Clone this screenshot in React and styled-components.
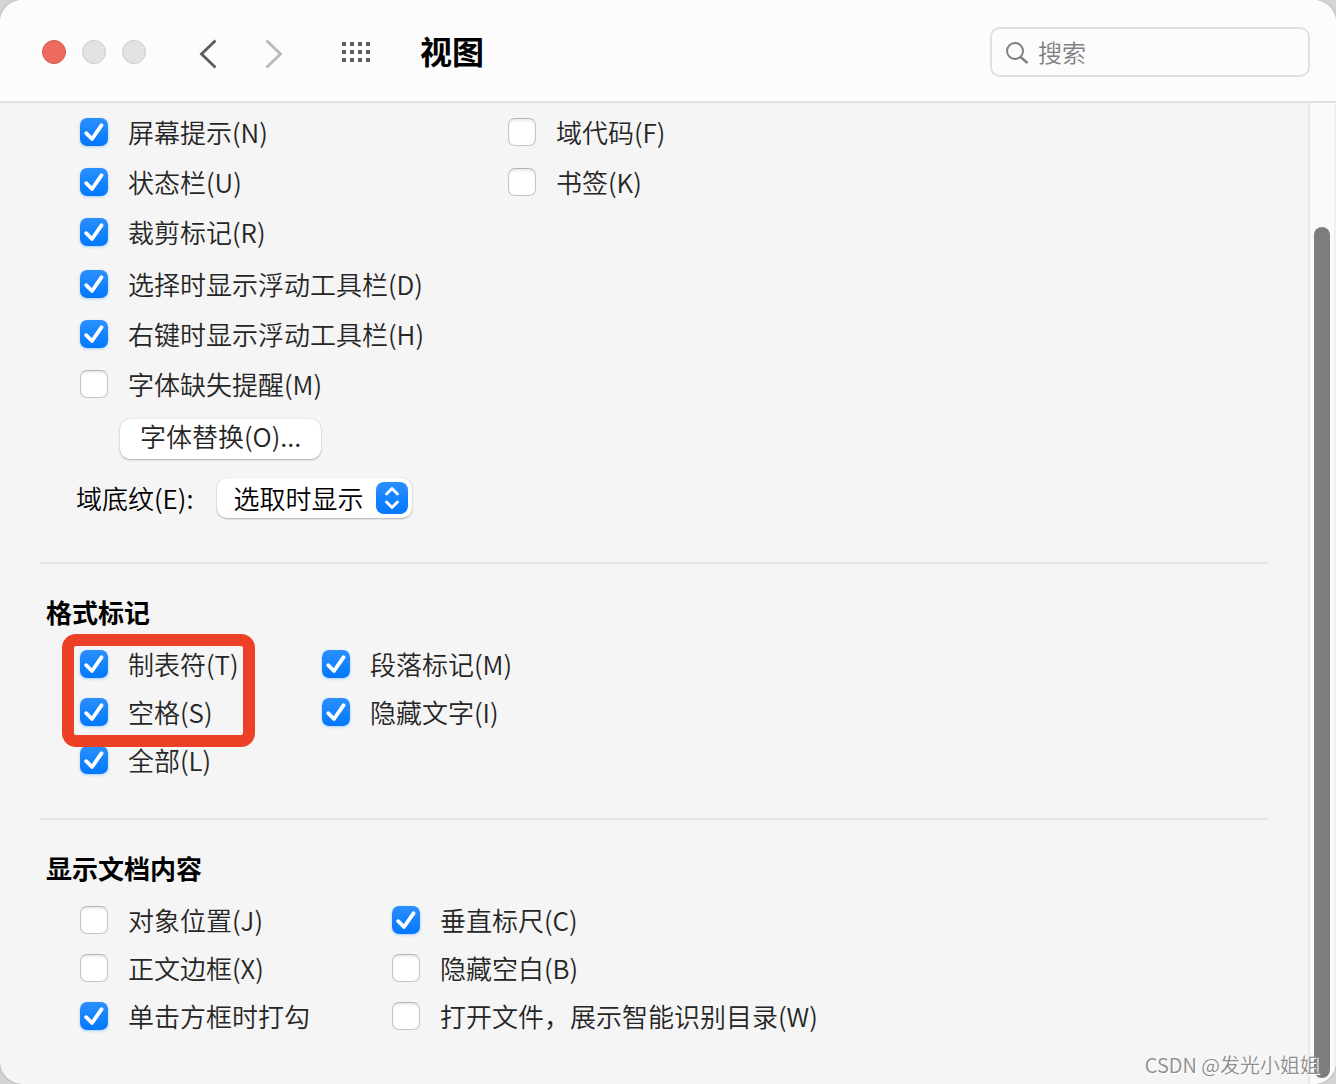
import React, { useState } from 'react';
import styled, { createGlobalStyle } from 'styled-components';

const App = () => {
  const [keyword, setKeyword] = useState('');
  const [shading, setShading] = useState('selected');

  return (
    <>
      <GlobalStyle />
      <Window>
        <Toolbar>
          <TrafficLights>
            <Light $active aria-label="关闭" />
            <Light aria-label="最小化" />
            <Light aria-label="缩放" />
          </TrafficLights>
          <NavButtons>
            <IconButton aria-label="后退">
              <svg width="18" height="30" viewBox="0 0 18 30" fill="none" stroke="#5c5c5c" strokeWidth="2.8">
                <path d="M16.5 1.5 2.5 15 16.5 28.5" />
              </svg>
            </IconButton>
            <IconButton aria-label="前进">
              <svg width="18" height="30" viewBox="0 0 18 30" fill="none" stroke="#b9b9b9" strokeWidth="2.8">
                <path d="M1.5 1.5 15.5 15 1.5 28.5" />
              </svg>
            </IconButton>
          </NavButtons>
          <IconButton aria-label="全部显示">
            <svg width="28" height="20" viewBox="0 0 28 20" fill="#5e5e5e">
              {[0, 8, 16].map((y) =>
                [0, 8, 16, 24].map((x) => <rect key={`${x}-${y}`} x={x} y={y} width="4" height="4" />)
              )}
            </svg>
          </IconButton>
          <Title>视图</Title>
          <SearchBox>
            <svg width="24" height="24" viewBox="0 0 24 24" fill="none" stroke="#808080" strokeWidth="2">
              <circle cx="9" cy="11" r="8" />
              <path d="M14.5 17 21.5 23" strokeWidth="2.6" />
            </svg>
            <input
              type="text"
              aria-label="搜索"
              placeholder="搜索"
              value={keyword}
              onChange={(e) => setKeyword(e.target.value)}
            />
          </SearchBox>
        </Toolbar>

        <Body>
          <Content>
            <Section>
              <Columns>
                <Column $width={428}>
                  <Option label="屏幕提示(N)" checked />
                  <Option label="状态栏(U)" checked />
                  <Option label="裁剪标记(R)" checked />
                </Column>
                <Column>
                  <Option label="域代码(F)" />
                  <Option label="书签(K)" />
                </Column>
              </Columns>
              <FloatingOptions>
                <Option label="选择时显示浮动工具栏(D)" checked />
                <Option label="右键时显示浮动工具栏(H)" checked />
                <Option label="字体缺失提醒(M)" />
              </FloatingOptions>
              <PushButton>字体替换(O)...</PushButton>
              <SelectRow>
                <label htmlFor="shading">域底纹(E):</label>
                <SelectBox>
                  <select id="shading" value={shading} onChange={(e) => setShading(e.target.value)}>
                    <option value="selected">选取时显示</option>
                  </select>
                  <SelectArrow>
                    <svg width="32" height="32" viewBox="0 0 32 32" fill="none" stroke="#fff" strokeWidth="2.8" strokeLinecap="round" strokeLinejoin="round">
                      <path d="M10.5 12 16 6.5 21.5 12" />
                      <path d="M10.5 20 16 25.5 21.5 20" />
                    </svg>
                  </SelectArrow>
                </SelectBox>
              </SelectRow>
            </Section>

            <Divider />

            <Section $compact>
              <Heading>格式标记</Heading>
              <Columns>
                <Column $width={242}>
                  <Highlight>
                    <Option label="制表符(T)" checked />
                    <Option label="空格(S)" checked />
                  </Highlight>
                  <Option label="全部(L)" checked />
                </Column>
                <Column>
                  <Option label="段落标记(M)" checked />
                  <Option label="隐藏文字(I)" checked />
                </Column>
              </Columns>
            </Section>

            <Divider />

            <Section $compact>
              <Heading>显示文档内容</Heading>
              <Columns>
                <Column $width={312}>
                  <Option label="对象位置(J)" />
                  <Option label="正文边框(X)" />
                  <Option label="单击方框时打勾" checked />
                </Column>
                <Column>
                  <Option label="垂直标尺(C)" checked />
                  <Option label="隐藏空白(B)" />
                  <Option label="打开文件，展示智能识别目录(W)" />
                </Column>
              </Columns>
            </Section>
          </Content>
          <ScrollTrack>
            <ScrollThumb />
          </ScrollTrack>
        </Body>
        <Watermark>CSDN @发光小姐姐</Watermark>
      </Window>
    </>
  );
};

const Option = ({ label, checked = false }) => {
  const [on, setOn] = useState(checked);

  return (
    <OptionLabel>
      <Check>
        <input type="checkbox" checked={on} onChange={() => setOn(!on)} />
        {on && (
          <svg width="28" height="28" viewBox="0 0 28 28" fill="none" stroke="#fff" strokeWidth="3.8" strokeLinecap="round" strokeLinejoin="round">
            <path d="M6.2 15.2 12 21 21.6 7.2" />
          </svg>
        )}
      </Check>
      <span>{label}</span>
    </OptionLabel>
  );
};

const GlobalStyle = createGlobalStyle`
  * {
    box-sizing: border-box;
  }
  body {
    margin: 0;
    background: #d4d4d4;
    font-family: "Noto Sans CJK SC", sans-serif;
    font-size: 26px;
    font-weight: 350;
    color: #262626;
  }
  button, input, select {
    font: inherit;
    color: inherit;
  }
`;

const Window = styled.div`
  position: relative;
  display: flex;
  flex-direction: column;
  min-height: 100vh;
  background: #f5f5f5;
  border-radius: 22px;
  overflow: hidden;
  box-shadow: 0 0 2px #8c8c8c;
`;

const Toolbar = styled.header`
  display: flex;
  align-items: center;
  height: 103px;
  padding: 2px 26px 0 42px;
  background: #fcfcfc;
  border-bottom: 2px solid #e0e0e0;
`;

const TrafficLights = styled.div`
  display: flex;
  gap: 16px;
`;

const Light = styled.button`
  width: 24px;
  height: 24px;
  padding: 0;
  border-radius: 50%;
  border: 1px solid ${({ $active }) => ($active ? '#d8574c' : '#cbcbcb')};
  background: ${({ $active }) => ($active ? '#ed6a5e' : '#e3e3e3')};
`;

const NavButtons = styled.div`
  display: flex;
  gap: 48px;
  margin: 4px 59px 0 53px;
`;

const IconButton = styled.button`
  display: flex;
  padding: 0;
  border: none;
  background: none;
`;

const Title = styled.h1`
  margin: 0 0 4px 50px;
  font-size: 32px;
  font-weight: 700;
  line-height: 40px;
  color: #000;
`;

const SearchBox = styled.div`
  display: flex;
  align-items: center;
  gap: 8px;
  width: 320px;
  height: 50px;
  margin-left: auto;
  padding: 0 14px;
  border: 2px solid #e0e0e0;
  border-radius: 10px;
  svg {
    flex: none;
  }
  input {
    flex: 1;
    min-width: 0;
    padding: 0;
    border: none;
    outline: none;
    background: none;
    font-size: 24px;
  }
  input::placeholder {
    color: #808080;
  }
`;

const Body = styled.main`
  flex: 1;
  display: flex;
`;

const Content = styled.div`
  flex: 1;
  padding: 4px 40px 0;
`;

const Section = styled.section`
  --row: ${({ $compact }) => ($compact ? 48 : 50)}px;
  padding-bottom: ${({ $compact }) => ($compact ? 34 : 44)}px;
`;

const Heading = styled.h2`
  margin: 0 0 8px;
  padding: 28px 0 0 6px;
  font-size: 26px;
  font-weight: 700;
  line-height: 40px;
  color: #000;
`;

const Columns = styled.div`
  display: flex;
  padding-left: 40px;
`;

const Column = styled.div`
  width: ${({ $width }) => ($width ? `${$width}px` : 'auto')};
`;

const FloatingOptions = styled.div`
  padding: 2px 0 0 40px;
`;

const OptionLabel = styled.label`
  display: flex;
  align-items: center;
  gap: 20px;
  width: fit-content;
  height: var(--row);
  line-height: 40px;
  white-space: nowrap;
`;

const Check = styled.span`
  position: relative;
  display: flex;
  input {
    appearance: none;
    width: 28px;
    height: 28px;
    margin: 0;
    border: 1px solid #c4c4c4;
    border-top-color: #b4b4b4;
    border-radius: 7px;
    background: #fff;
    box-shadow: inset 0 2px 2px #ececec;
  }
  input:checked {
    border: none;
    background: linear-gradient(#2b90ff, #0277fc);
    box-shadow: 0 1px 3px #a9cdf8;
  }
  svg {
    position: absolute;
    inset: 0;
    pointer-events: none;
  }
`;

const PushButton = styled.button`
  display: block;
  height: 40px;
  margin: 10px 0 0 80px;
  padding: 0 20px 6px;
  border: none;
  border-radius: 10px;
  background: #fff;
  box-shadow: 0 1px 2px #b0b0b0, 0 0 1px #c4c4c4;
  line-height: 34px;
`;

const SelectRow = styled.div`
  display: flex;
  align-items: center;
  gap: 24px;
  margin-top: 19px;
  padding-left: 36px;
  line-height: 40px;
  color: #000;
`;

const SelectBox = styled.div`
  position: relative;
  select {
    appearance: none;
    display: block;
    height: 40px;
    padding: 0 48px 0 16px;
    border: none;
    border-radius: 10px;
    background: #fff;
    box-shadow: 0 1px 2px #b0b0b0, 0 0 1px #c4c4c4;
  }
`;

const SelectArrow = styled.span`
  position: absolute;
  top: 4px;
  right: 4px;
  height: 32px;
  border-radius: 8px;
  background: linear-gradient(#2b90ff, #0277fc);
  pointer-events: none;
  svg {
    display: block;
  }
`;

const Divider = styled.hr`
  height: 2px;
  margin: 0;
  border: none;
  background: #e6e6e6;
`;

const Highlight = styled.div`
  position: relative;
  width: fit-content;
  &::after {
    content: "";
    position: absolute;
    inset: -6px -16px -11px -18px;
    border: 12px solid #ec4027;
    border-radius: 14px;
    pointer-events: none;
    z-index: 1;
  }
`;

const ScrollTrack = styled.div`
  display: flex;
  width: 28px;
  padding: 124px 4px 6px;
  border-left: 2px solid #e8e8e8;
  border-right: 2px solid #f0f0f0;
  background: #fafafa;
`;

const ScrollThumb = styled.div`
  width: 16px;
  border-radius: 8px;
  background: #7d7d7d;
`;

const Watermark = styled.div`
  position: absolute;
  right: 16px;
  bottom: 4px;
  font-size: 20px;
  line-height: 30px;
  color: #8e8e8e;
  text-shadow: 1px 1px 0 #fff;
`;

export default App;
